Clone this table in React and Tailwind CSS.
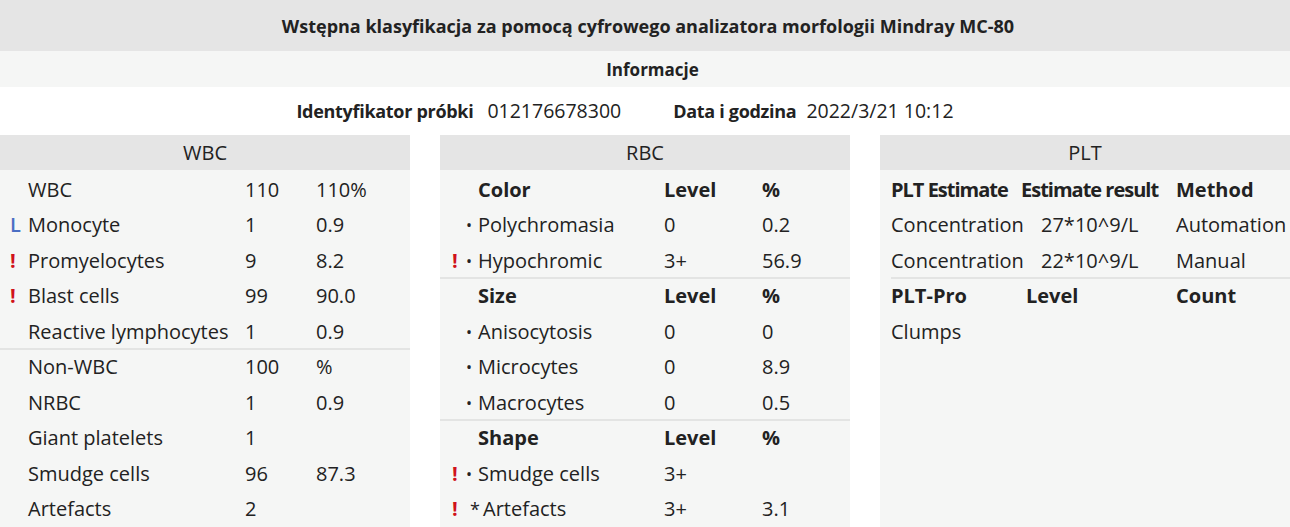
import React from "react";

const Flag = ({ type }) => {
  if (type === "!") return <span className="text-[#d0121b] font-bold">!</span>;
  if (type === "L") return <span className="text-[#4a6fc4] font-semibold">L</span>;
  return null;
};

const wbcRows = [
  { name: "WBC", count: "110", pct: "110%" },
  { flag: "L", name: "Monocyte", count: "1", pct: "0.9" },
  { flag: "!", name: "Promyelocytes", count: "9", pct: "8.2" },
  { flag: "!", name: "Blast cells", count: "99", pct: "90.0" },
  { name: "Reactive lymphocytes", count: "1", pct: "0.9", line: true },
  { name: "Non-WBC", count: "100", pct: "%" },
  { name: "NRBC", count: "1", pct: "0.9" },
  { name: "Giant platelets", count: "1", pct: "" },
  { name: "Smudge cells", count: "96", pct: "87.3" },
  { name: "Artefacts", count: "2", pct: "" },
];

const rbcRows = [
  { head: true, name: "Color", level: "Level", pct: "%" },
  { mark: "•", name: "Polychromasia", level: "0", pct: "0.2" },
  { flag: "!", mark: "•", name: "Hypochromic", level: "3+", pct: "56.9", line: true },
  { head: true, name: "Size", level: "Level", pct: "%" },
  { mark: "•", name: "Anisocytosis", level: "0", pct: "0" },
  { mark: "•", name: "Microcytes", level: "0", pct: "8.9" },
  { mark: "•", name: "Macrocytes", level: "0", pct: "0.5", line: true },
  { head: true, name: "Shape", level: "Level", pct: "%" },
  { flag: "!", mark: "•", name: "Smudge cells", level: "3+", pct: "" },
  { flag: "!", mark: "*", name: "Artefacts", level: "3+", pct: "3.1" },
];

const PanelHeader = ({ title }) => (
  <div className="h-[35px] bg-[#e5e5e5] flex items-center justify-center">{title}</div>
);

// row with optional divider underneath (divider doesn't shift the text)
const rowCls = (line) =>
  `h-[35.5px] flex items-center ${line ? "border-b-2 border-[#e3e4e3] pt-[2px]" : ""}`;

export default function App() {
  return (
    <div className="w-[1290px] h-[527px] overflow-hidden bg-white text-[#222] text-[20px] font-['Open_Sans',sans-serif] leading-none">
      {/* Title */}
      <div className="h-[51px] bg-[#e5e5e5] flex items-center justify-center pl-[6px] font-bold text-[18px]">
        Wstępna klasyfikacja za pomocą cyfrowego analizatora morfologii Mindray MC-80
      </div>
      <div className="h-[36px] bg-[#f5f6f5] flex items-center justify-center pl-[15px] font-bold text-[17px]">
        Informacje
      </div>
      <div className="h-[48px] flex items-center justify-center pr-[40px]">
        <span className="font-bold text-[18px] tracking-[-0.3px]">Identyfikator próbki</span>
        <span className="ml-[14px] text-[19.5px]">012176678300</span>
        <span className="ml-[52px] font-bold text-[18px] tracking-[-0.3px]">Data i godzina</span>
        <span className="ml-[10px] text-[19.5px]">2022/3/21 10:12</span>
      </div>

      <div className="grid grid-cols-3 gap-[30px] h-[392px]">
        {/* WBC */}
        <div className="flex flex-col">
          <PanelHeader title="WBC" />
          <div className="flex-1 bg-[#f5f6f5] pt-[2px]">
            {wbcRows.map((r, i) => (
              <div key={i} className={rowCls(r.line)}>
                <span className="w-[28px] pl-[10px]">
                  <Flag type={r.flag} />
                </span>
                <span className="w-[217px] whitespace-nowrap">{r.name}</span>
                <span className="w-[71px]">{r.count}</span>
                <span>{r.pct}</span>
              </div>
            ))}
          </div>
        </div>

        {/* RBC */}
        <div className="flex flex-col">
          <PanelHeader title="RBC" />
          <div className="flex-1 bg-[#f5f6f5] pt-[2px]">
            {rbcRows.map((r, i) => (
              <div key={i} className={`${rowCls(r.line)} ${r.head ? "font-bold" : ""}`}>
                <span className="w-[26px] pl-[12px]">
                  <Flag type={r.flag} />
                </span>
                {r.mark === "*" ? (
                  <>
                    <span className="w-[17px] pl-[4px] text-[18px]">*</span>
                    <span className="w-[181px] whitespace-nowrap">{r.name}</span>
                  </>
                ) : (
                  <>
                    <span className="w-[12px] text-[16px]">{r.mark}</span>
                    <span className="w-[186px] whitespace-nowrap">{r.name}</span>
                  </>
                )}
                <span className="w-[98px]">{r.level}</span>
                <span>{r.pct}</span>
              </div>
            ))}
          </div>
        </div>

        {/* PLT */}
        <div className="flex flex-col">
          <PanelHeader title="PLT" />
          <div className="flex-1 bg-[#f5f6f5] pt-[2px] pl-[11px]">
            <div className={`${rowCls(false)} font-bold whitespace-nowrap`}>
              <span className="w-[130px] tracking-[-1px]">PLT Estimate</span>
              <span className="w-[155px] tracking-[-1px]">Estimate result</span>
              <span>Method</span>
            </div>
            <div className={`${rowCls(false)} whitespace-nowrap`}>
              <span className="w-[150px]">Concentration</span>
              <span className="w-[135px]">27*10^9/L</span>
              <span>Automation</span>
            </div>
            <div className={`${rowCls(true)} whitespace-nowrap`}>
              <span className="w-[150px]">Concentration</span>
              <span className="w-[135px]">22*10^9/L</span>
              <span>Manual</span>
            </div>
            <div className={`${rowCls(false)} font-bold whitespace-nowrap`}>
              <span className="w-[135px]">PLT-Pro</span>
              <span className="w-[150px]">Level</span>
              <span>Count</span>
            </div>
            <div className={rowCls(false)}>Clumps</div>
          </div>
        </div>
      </div>
    </div>
  );
}
